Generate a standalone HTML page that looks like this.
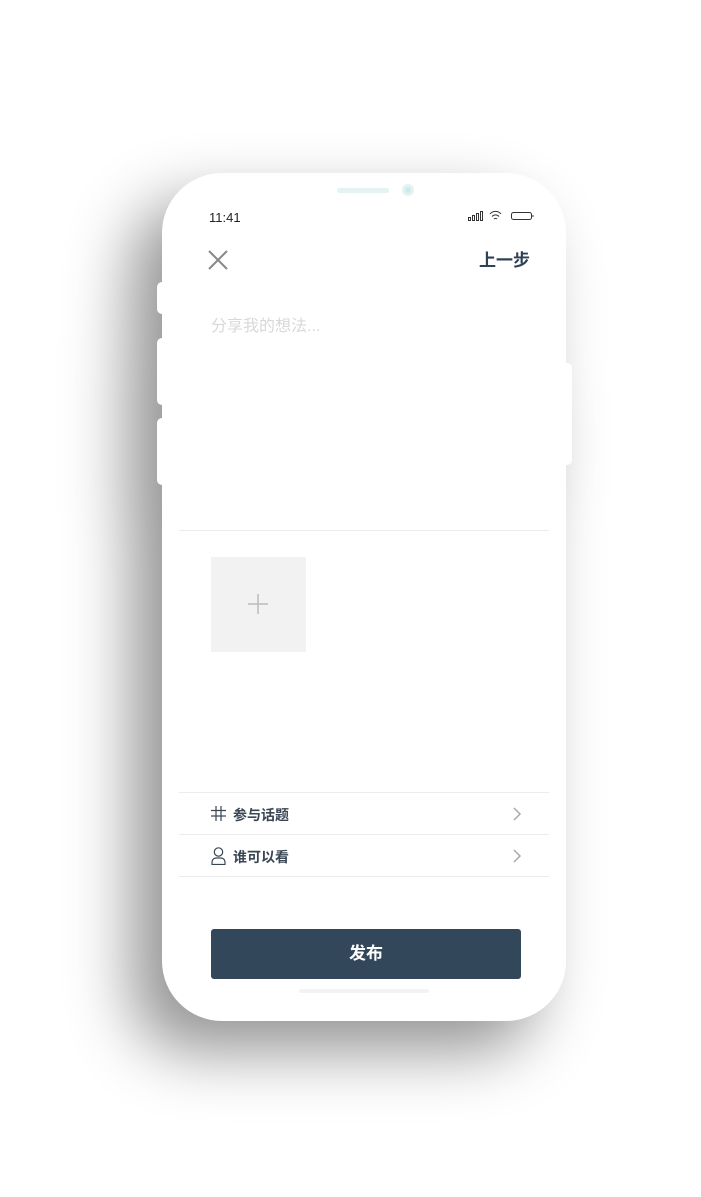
<!DOCTYPE html>
<html><head><meta charset="utf-8"><style>
html,body{margin:0;padding:0;background:#fff;}
body{width:701px;height:1197px;position:relative;overflow:hidden;font-family:"Liberation Sans","Noto Sans CJK SC",sans-serif;}
.wrap{position:absolute;left:0;top:0;width:701px;height:1197px;filter:drop-shadow(-30px 30px 32px rgba(0,0,0,0.42));}
.btn{position:absolute;background:#fff;border-radius:5px;}
.phone{position:absolute;left:162px;top:173px;width:404px;height:848px;border-radius:60px;background:#fff;overflow:hidden;}
.abs{position:absolute;}
.line{position:absolute;left:17px;width:370px;height:1px;background:#ececec;}
</style></head><body>
<div class="wrap">
<div class="btn" style="left:157px;top:282px;width:12px;height:32px"></div>
<div class="btn" style="left:157px;top:338px;width:12px;height:67px"></div>
<div class="btn" style="left:157px;top:418px;width:12px;height:67px"></div>
<div class="btn" style="left:560px;top:363px;width:12px;height:102px"></div>
<div class="phone">
  <div class="abs" style="left:175px;top:15px;width:52px;height:5px;border-radius:3px;background:#e3f3f2"></div>
  <div class="abs" style="left:240px;top:11px;width:12px;height:12px;border-radius:50%;background:#e3f3f2"></div>
  <div class="abs" style="left:243px;top:14px;width:6px;height:6px;border-radius:50%;background:#cfeaea"></div>
  <div class="abs" style="left:47px;top:37px;font-size:13px;color:#222">11:41</div>
  <svg class="abs" style="left:305px;top:36px" width="70" height="14" viewBox="0 0 70 14">
    <g fill="none" stroke="#333" stroke-width="1">
      <rect x="1.5" y="8.5" width="2" height="3"/><rect x="5.5" y="6.5" width="2" height="5"/><rect x="9.5" y="4.5" width="2" height="7"/><rect x="13.5" y="2.5" width="2" height="9"/>
      <path d="M23 5 a7 7 0 0 1 11 0 M25 7.5 a4.5 4.5 0 0 1 7 0 M27 10 a2 2 0 0 1 3 0"/>
      <rect x="44.5" y="3.5" width="20" height="7" rx="2"/>
      <path d="M66 6v2"/>
    </g>
  </svg>
  <svg class="abs" style="left:46px;top:77px" width="20" height="20" viewBox="0 0 20 20"><path d="M1 1L19 19M19 1L1 19" stroke="#888" stroke-width="2"/></svg>
  <div class="abs" style="left:317px;top:73px;font-size:17px;font-weight:bold;color:#2f4154">上一步</div>
  <div class="abs" style="left:49px;top:139px;font-size:16px;color:#d8d8d8">分享我的想法...</div>
  <div class="line" style="top:357px"></div>
  <div class="abs" style="left:49px;top:384px;width:95px;height:95px;background:#f2f2f2"></div>
  <svg class="abs" style="left:86px;top:421px" width="20" height="20"><path d="M10 0V20M0 10H20" stroke="#bbb" stroke-width="1.5"/></svg>
  <div class="line" style="top:619px"></div>
  <div class="line" style="top:661px"></div>
  <div class="line" style="top:703px"></div>
  <svg class="abs" style="left:49px;top:633px" width="15" height="15" viewBox="0 0 15 15"><path d="M5 0V15M10 0V15M0 4.5H15M0 10H15" stroke="#3a4654" stroke-width="1.2"/></svg>
  <div class="abs" style="left:71px;top:632px;font-size:14px;font-weight:bold;color:#3a4654">参与话题</div>
  <svg class="abs" style="left:49px;top:674px" width="15" height="18" viewBox="0 0 15 18"><circle cx="7.5" cy="5" r="4.2" fill="none" stroke="#3a4654" stroke-width="1.2"/><path d="M1 17.5V15a4 4 0 0 1 4-4h5a4 4 0 0 1 4 4v2.5Z" fill="none" stroke="#3a4654" stroke-width="1.2"/></svg>
  <div class="abs" style="left:71px;top:674px;font-size:14px;font-weight:bold;color:#3a4654">谁可以看</div>
  <svg class="abs" style="left:351px;top:634px" width="9" height="14"><path d="M1 1L7 7L1 13" fill="none" stroke="#aaa" stroke-width="1.5"/></svg>
  <svg class="abs" style="left:351px;top:676px" width="9" height="14"><path d="M1 1L7 7L1 13" fill="none" stroke="#aaa" stroke-width="1.5"/></svg>
  <div class="abs" style="left:49px;top:756px;width:310px;height:50px;border-radius:3px;background:#32475a;color:#fff;font-size:17px;font-weight:bold;text-align:center;line-height:50px">发布</div>
  <div class="abs" style="left:137px;top:816px;width:130px;height:4px;border-radius:2px;background:#f1f3f5"></div>
</div>
</div>
</body></html>
